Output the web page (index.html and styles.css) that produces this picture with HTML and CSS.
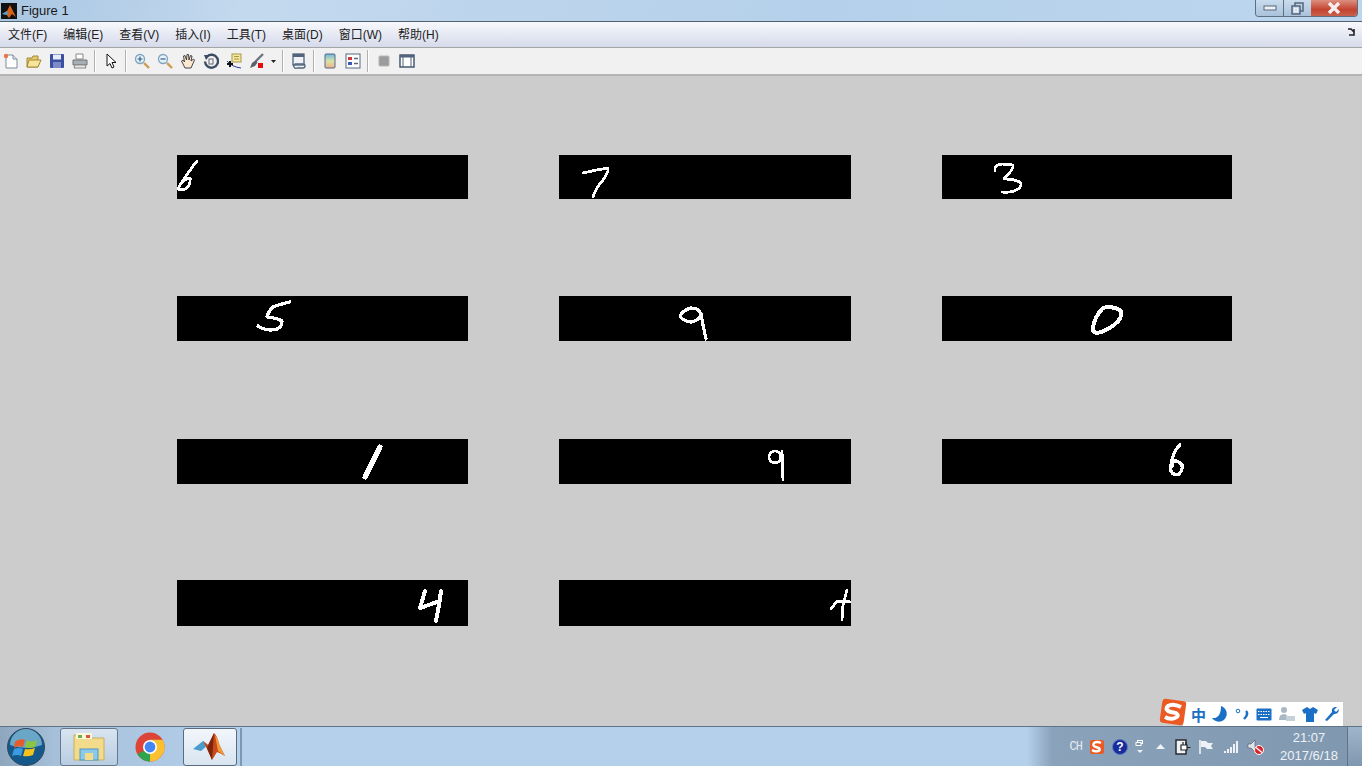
FILE: index.html
```html
<!DOCTYPE html>
<html lang="zh-CN">

<head>
    <meta charset="UTF-8">
    <title>Figure 1</title>
    <link rel="stylesheet" href="styles.css">
</head>

<body>
    <div class="window">
        <div class="titlebar">
            <svg class="appicon" viewBox="0 0 16 16">
                <rect width="16" height="16" fill="#111" />
                <path d="M1 11 L6 8 L9 2 L15 14 L11 11 L8 15 L5 11Z" fill="#d8641c" />
                <path d="M1 11 L6 8 L7 11 L5 12Z" fill="#4aa3c8" />
            </svg>
            <span class="title">Figure 1</span>
            <div class="winbtns">
                <div class="winbtn minbtn"><svg width="14" height="8" viewBox="0 0 14 8"><rect x="1" y="2" width="12" height="4" fill="#eef2f6" stroke="#56667a" /></svg></div>
                <div class="winbtn maxbtn"><svg width="13" height="13" viewBox="0 0 13 13"><rect x="4" y="1" width="8" height="8" fill="none" stroke="#56667a" stroke-width="1.5" /><rect x="1" y="4" width="8" height="8" fill="#c6d8ea" stroke="#56667a" stroke-width="1.5" /><rect x="3.5" y="6.5" width="3" height="3" fill="none" stroke="#eef2f6" /></svg></div>
                <div class="winbtn closebtn"><svg width="16" height="12" viewBox="0 0 16 12"><path d="M3 1 L13 11 M13 1 L3 11" stroke="#f5eeee" stroke-width="3.4" /></svg></div>
            </div>
        </div>

        <div class="menubar">
            <span>文件(F)</span>
            <span>编辑(E)</span>
            <span>查看(V)</span>
            <span>插入(I)</span>
            <span>工具(T)</span>
            <span>桌面(D)</span>
            <span>窗口(W)</span>
            <span>帮助(H)</span>
            <svg class="dock" width="9" height="8" viewBox="0 0 9 8"><path d="M1 1 L4 1 L7 4 M7 1 L7 7 L2 7" fill="none" stroke="#222" stroke-width="1.6" /></svg>
        </div>

        <div class="toolbar">
            <svg class="tool" viewBox="0 0 16 16"><path d="M3 2 H10 L14 6 V15 H3Z" fill="#fff" stroke="#7b8a9c" /><path d="M10 2 V6 H14" fill="#dfe8f2" stroke="#7b8a9c" /><circle cx="3" cy="3" r="2.2" fill="#e8764a" /></svg>
            <svg class="tool" viewBox="0 0 16 16"><path d="M1 5 H6 L7 3 H12 V14 H1Z" fill="#e8c868" stroke="#a08838" /><path d="M1 14 L3 7 H15 L12 14Z" fill="#f8e49a" stroke="#a08838" /></svg>
            <svg class="tool" viewBox="0 0 16 16"><rect x="1" y="1" width="14" height="14" rx="1" fill="#3b4fa0" /><rect x="4" y="1.5" width="8" height="5" fill="#e8ecf6" /><rect x="4" y="9" width="8" height="6" fill="#7c8ac8" /></svg>
            <svg class="tool" viewBox="0 0 16 16"><path d="M4 1 H11 V6 H4Z" fill="#fff" stroke="#888" /><path d="M1 7 H15 V12 H1Z" fill="#a8aeb4" stroke="#6c7278" /><path d="M3 12 H13 L14 15 H2Z" fill="#e6e8ea" stroke="#888" /></svg>
            <i class="sep"></i>
            <svg class="tool" viewBox="0 0 16 16"><path d="M4 1 V13 L7 10.5 L9 15 L11 14 L9 9.5 H13Z" fill="#fff" stroke="#111" /></svg>
            <i class="sep"></i>
            <svg class="tool" viewBox="0 0 16 16"><circle cx="6" cy="6" r="4.5" fill="#e6f2fa" stroke="#7ea4c0" stroke-width="1.3" /><path d="M10 10 L15 15" stroke="#d09a50" stroke-width="2.4" /><path d="M3.5 6 H8.5 M6 3.5 V8.5" stroke="#2c5c88" stroke-width="1.2" /></svg>
            <svg class="tool" viewBox="0 0 16 16"><circle cx="6" cy="6" r="4.5" fill="#e6f2fa" stroke="#7ea4c0" stroke-width="1.3" /><path d="M10 10 L15 15" stroke="#d09a50" stroke-width="2.4" /><path d="M3.5 6 H8.5" stroke="#2c5c88" stroke-width="1.2" /></svg>
            <svg class="tool" viewBox="0 0 16 16"><path d="M5 15 L1.5 8 L3 7 L4.5 9 L3.5 3 L5 2.5 L6.5 7 L7 1.5 L8.5 1.5 L9 7 L10.5 2.5 L12 3 L11 8 L13.5 6 L14.5 7 L11 15Z" fill="#fce8d0" stroke="#333" stroke-width=".9" /></svg>
            <svg class="tool" viewBox="0 0 16 16"><path d="M4 3.5 A6.5 6.5 0 1 1 2 8.5" fill="none" stroke="#3c4c64" stroke-width="2.4" /><path d="M1 2 L7 2 L3 7Z" fill="#3c4c64" /><rect x="6" y="6" width="4" height="5" fill="none" stroke="#667" /></svg>
            <svg class="tool" viewBox="0 0 16 16"><rect x="6" y="1" width="9" height="8" fill="#f4e8a0" stroke="#a89848" /><path d="M8 3.5 H13 M8 6 H13" stroke="#a89848" /><path d="M1 8 Q6 14 15 15" fill="none" stroke="#2a3a9c" /><path d="M4 8 V14 M1 11 H7" stroke="#111" stroke-width="2" /></svg>
            <div class="brush">
                <svg class="tool" viewBox="0 0 16 16"><path d="M14 1 L7 8" stroke="#6c7480" stroke-width="2.4" /><path d="M7 7 L3 10 L1 15 L6 13 L8.5 9.5Z" fill="#59616c" /><rect x="9" y="10" width="5" height="5" fill="#e01010" /></svg>
                <svg class="caret" width="5" height="3" viewBox="0 0 5 3"><path d="M0 0 H5 L2.5 3Z" fill="#222" /></svg>
            </div>
            <i class="sep"></i>
            <svg class="tool" viewBox="0 0 16 16"><rect x="2" y="1" width="11" height="11" fill="#eef2f6" stroke="#51647c" stroke-width="1.3" /><rect x="2" y="1" width="11" height="3" fill="#51647c" /><path d="M4 11 H12 A2 2 0 0 1 12 15 H6 A2 2 0 0 1 4 11Z" fill="none" stroke="#51647c" stroke-width="1.3" /></svg>
            <i class="sep"></i>
            <svg class="tool" viewBox="0 0 16 16"><defs><linearGradient id="cbar" x1="0" y1="0" x2="0" y2="1"><stop offset="0" stop-color="#6cb4e4" /><stop offset=".5" stop-color="#d8e4a8" /><stop offset="1" stop-color="#f0b088" /></linearGradient></defs><rect x="3" y="1" width="10" height="14" rx="1" fill="url(#cbar)" stroke="#56687e" /></svg>
            <svg class="tool" viewBox="0 0 16 16"><rect x="1" y="1" width="14" height="14" fill="#fff" stroke="#56687e" /><rect x="3" y="4" width="4" height="3" fill="#d03838" /><rect x="3" y="9" width="4" height="3" fill="#3858c0" /><path d="M9 5.5 H13 M9 10.5 H13" stroke="#56687e" stroke-width="1.3" /></svg>
            <i class="sep"></i>
            <svg class="tool" viewBox="0 0 16 16"><rect x="3" y="3" width="10" height="10" rx="1" fill="#9c9c9c" stroke="#b4b4b4" /></svg>
            <svg class="tool" viewBox="0 0 16 16"><rect x="1" y="2" width="14" height="12" fill="#fff" stroke="#3c4e68" stroke-width="1.4" /><rect x="1" y="2" width="14" height="2.5" fill="#50627c" /><path d="M4 4 V14 M12 4 V14" stroke="#50627c" /></svg>
        </div>

        <div class="canvas">
            <div class="plot"><svg viewBox="0 0 292 47"><path class="stroke" d="M20 6 Q12 16 3 30 L1 34 Q8 36 11 32 Q14 26 13 23 Q8 23 3 30" /></svg></div>
            <div class="plot"><svg viewBox="0 0 292 47"><path class="stroke" d="M24 18 Q36 15 49 13 Q50 17 44 25 Q37 33 34 42" /></svg></div>
            <div class="plot"><svg viewBox="0 0 292 47"><path class="stroke" d="M53 16 Q52 10 60 9 L71 10 Q72 14 62 24 Q74 24 79 28 Q80 33 72 36 Q65 38 60 37" /></svg></div>
            <div class="plot"><svg viewBox="0 0 292 47"><path class="stroke mid" d="M113 6 Q100 9 96 11 Q91 16 90 21 Q100 22 105 25 Q105 31 100 33 Q90 36 81 30" /></svg></div>
            <div class="plot"><svg viewBox="0 0 292 47"><path class="stroke mid" d="M142 18 Q140 12 132 12 Q124 14 121 20 Q124 25 132 26 Q140 25 142 18 Q144 30 147 43" /></svg></div>
            <div class="plot"><svg viewBox="0 0 292 47"><path class="stroke thick" d="M151 31 Q153 20 161 12 Q170 9 179 15 Q181 22 172 29 Q162 36 155 37 Q150 36 151 31Z" /></svg></div>
            <div class="plot third"><svg viewBox="0 0 292 47"><path class="stroke wide" d="M203 8 L188 38" /></svg></div>
            <div class="plot third"><svg viewBox="0 0 292 47"><circle class="stroke" cx="216" cy="18" r="6" /><path class="stroke" d="M223 12 L224 41" /></svg></div>
            <div class="plot third"><svg viewBox="0 0 292 47"><path class="stroke mid" d="M238 6 Q232 12 231 18 Q228 26 229 32 Q231 37 237 35 Q241 31 240 26 Q236 21 232 22 Q230 24 230 28" /></svg></div>
            <div class="plot fourth"><svg viewBox="0 0 292 47"><path class="stroke thick" d="M248 11 L243 28 L263 21 M264 11 L262 25 L259 41" /></svg></div>
            <div class="plot fourth"><svg viewBox="0 0 292 47"><path class="stroke" d="M288 10 L284 25 L283 40 M272 29 L278 21 L292 22" /></svg></div>
        </div>

        <div class="imebar">
            <svg class="imelogo" width="28" height="28" viewBox="0 0 28 28"><rect x="2" y="2" width="24" height="24" rx="3" fill="#ec5a24" transform="rotate(8 14 14)" /><path d="M22 9 Q14 5 9 8 Q5 12 12 14 L17 15 Q21 18 16 20 Q11 22 6 19" fill="none" stroke="#fff" stroke-width="4" /></svg>
            <div class="imeitems">
                <span class="imezh">中</span>
                <svg width="16" height="16" viewBox="0 0 16 16"><path d="M9 0 A8 8 0 1 1 0 12 Q9 13 9 0Z" fill="#1b6fc4" /></svg>
                <svg width="16" height="16" viewBox="0 0 16 16"><circle cx="4" cy="5" r="1.8" fill="none" stroke="#1b6fc4" /><path d="M12 5 Q15 8 10 13" fill="none" stroke="#1b6fc4" stroke-width="2.4" /></svg>
                <svg width="16" height="13" viewBox="0 0 16 13"><rect x=".5" y=".5" width="15" height="12" rx="1" fill="#1b6fc4" /><path d="M2 3.5 H14 M2 6.5 H14" stroke="#fff" stroke-dasharray="1.5 1" /><path d="M4 9.5 H12" stroke="#fff" /></svg>
                <svg width="18" height="16" viewBox="0 0 18 16"><circle cx="6" cy="4" r="3" fill="#aab8c6" /><path d="M1 14 Q1 8 6 8 Q10 8 10 14Z" fill="#aab8c6" /><rect x="8" y="10" width="9" height="5" fill="#c6d0da" /></svg>
                <svg width="16" height="15" viewBox="0 0 16 15"><path d="M5 0 L8 2 L11 0 L16 3 L14 7 L12 6 V15 H4 V6 L2 7 L0 3Z" fill="#1b6fc4" /></svg>
                <svg width="16" height="16" viewBox="0 0 16 16"><path d="M1 14 L8 6 Q7 2 11 1 L13 1 L10 4 L12 6 L15 3 Q15 8 10 8 L3 15Z" fill="#1b6fc4" /></svg>
            </div>
        </div>

        <div class="taskbar">
            <div class="orb">
                <svg width="38" height="38" viewBox="0 0 38 38">
                    <circle cx="19" cy="19" r="18.5" fill="#15588a" stroke="#33495c" />
                    <path d="M3 17 A16 16 0 0 1 35 17 Q19 23 3 17Z" fill="#6aa6c6" />
                    <path d="M8 14 Q12 10 18 12 L16 19 Q11 17 7 20Z" fill="#e85a2a" />
                    <path d="M20 12 Q24 15 30 12 L28 19 Q23 21 18 19Z" fill="#8cc63f" />
                    <path d="M7 21 Q11 19 16 21 L14 28 Q10 26 5 28Z" fill="#3c9ae0" />
                    <path d="M18 21 Q23 22 28 20 L26 27 Q21 29 16 28Z" fill="#f6c21c" />
                </svg>
            </div>
            <div class="taskbtn explorer">
                <svg width="34" height="30" viewBox="0 0 34 30"><path d="M2 3 H14 L16 6 H32 V28 H2Z" fill="#f2dc8c" stroke="#c8ae5c" /><rect x="4" y="1" width="16" height="6" fill="#fbf6dc" /><rect x="6" y="3" width="4" height="3" fill="#6cb04c" /><rect x="14" y="3" width="4" height="3" fill="#d05a3c" /><rect x="8" y="17" width="18" height="11" fill="#8cc8e8" stroke="#4c98c8" /><rect x="13" y="21" width="8" height="7" fill="#f2dc8c" /></svg>
            </div>
            <div class="taskbtn plain">
                <svg width="30" height="30" viewBox="0 0 30 30">
                    <circle cx="15" cy="15" r="14.5" fill="#dd4437" />
                    <path d="M15 15 L2.44 22.25 A14.5 14.5 0 0 0 15 29.5Z" fill="#2ea44f" />
                    <path d="M15 15 L15 29.5 A14.5 14.5 0 0 0 27.56 7.75 L15 7.75Z" fill="#fbc02d" />
                    <path d="M2.44 7.75 L8 19 L15 15Z" fill="#dd4437" />
                    <circle cx="15" cy="15" r="7" fill="#fff" />
                    <circle cx="15" cy="15" r="5.4" fill="#4285f4" />
                </svg>
            </div>
            <div class="taskbtn active">
                <svg width="34" height="30" viewBox="0 0 34 30">
                    <path d="M0 17 L10 9 L15 13 L8 19Z" fill="#4a9ccc" />
                    <path d="M10 9 L15 13 L21 1 Q24 3 26 12 L32 24 Q27 21 24 20 L19 28 L14 17Z" fill="#c84a18" />
                    <path d="M21 1 L19 28 L14 16Z" fill="#7c2410" />
                    <path d="M22 3 Q25 6 27 14 L32 24 L25 19Z" fill="#ef9a3c" />
                </svg>
            </div>
            <i class="taskgroove"></i>
            <div class="tray">
                <span class="lang">CH</span>
                <svg width="16" height="16" viewBox="0 0 16 16"><rect x="1" y="1" width="14" height="14" rx="2" fill="#ec5a24" /><path d="M12 4 Q8 2 5 4 Q3 7 7 8 L10 9 Q12 11 9 12 Q6 13 3 11" fill="none" stroke="#fff" stroke-width="2.4" /></svg>
                <svg width="16" height="16" viewBox="0 0 16 16"><circle cx="8" cy="8" r="7.5" fill="#1a2c9c" stroke="#5c78c0" /><text class="helpmark" x="8" y="12" text-anchor="middle">?</text></svg>
                <svg width="10" height="16" viewBox="0 0 10 16"><rect x="2.5" y="1.5" width="5" height="3" fill="none" stroke="#fff" /><rect x="1" y="3.5" width="5" height="3" fill="#7e96ae" stroke="#fff" /><path d="M2 11 H8 L5 14Z" fill="#eef2f6" /></svg>
                <svg class="arrowup" width="9" height="6" viewBox="0 0 9 6"><path d="M0 5 L4.5 0 L9 5Z" fill="#eef2f6" /></svg>
                <svg class="plug" width="16" height="16" viewBox="0 0 16 16"><rect x="1" y="1" width="10" height="14" fill="#eef2f6" stroke="#222" stroke-width="1.4" /><path d="M6 6 H12 V11 H6Z M12 8.5 H15.5 M8 6 V3 M11 6 V3" fill="#fff" stroke="#222" stroke-width="1.2" /></svg>
                <svg width="16" height="16" viewBox="0 0 16 16"><path d="M2 1 V15" stroke="#eef2f6" stroke-width="1.6" /><path d="M3 2 H8 L10 4 H15 L13 7 L15 10 H9 L7 8 H3Z" fill="#eef2f6" /></svg>
                <svg class="signal" width="16" height="14" viewBox="0 0 16 14"><path d="M1 11 H3 V13 H1Z M4 9 H6 V13 H4Z M7 7 H9 V13 H7Z M10 4 H12 V13 H10Z M13 1 H15 V13 H13Z" fill="#eef2f6" /></svg>
                <svg class="speaker" width="17" height="16" viewBox="0 0 17 16"><path d="M1 5 H4 L8 1 V13 L4 9 H1Z" fill="#dde4ea" stroke="#556" stroke-width=".6" /><circle cx="12" cy="11" r="4.5" fill="#d8242c" stroke="#fff" /><path d="M9 8.5 L15 13.5" stroke="#fff" stroke-width="1.4" /></svg>
                <div class="clock">
                    <span>21:07</span>
                    <span>2017/6/18</span>
                </div>
                <div class="showdesktop"></div>
            </div>
        </div>
    </div>
</body>

</html>
```
FILE: styles.css
```css
* {
    margin: 0;
    padding: 0;
    box-sizing: border-box;
}

body {
    width: 1362px;
    height: 766px;
    overflow: hidden;
    font-family: "Liberation Sans", "Noto Sans CJK SC", sans-serif;
    font-size: 12px;
}

.window {
    position: relative;
    display: flex;
    flex-direction: column;
    height: 766px;
}

.titlebar {
    display: flex;
    align-items: center;
    height: 22px;
    background: linear-gradient(100deg, #a9c6e2 0%, #c3d9ee 18%, #b5d0ea 60%, #bdd6ee 100%);
    border-bottom: 1px solid #50606e;
}

.appicon {
    width: 16px;
    height: 16px;
    margin-left: 1px;
    flex: none;
}

.title {
    margin-left: 4px;
    font-size: 13px;
    color: #1a1a1a;
}

.winbtns {
    display: flex;
    align-self: flex-start;
    height: 17px;
    margin-left: auto;
    margin-right: 4px;
    border: 1px solid #5d6f82;
    border-top: 0;
    border-radius: 0 0 4px 4px;
    overflow: hidden;
}

.winbtn {
    display: flex;
    align-items: center;
    justify-content: center;
    height: 100%;
    background: linear-gradient(#c9dcee, #a9c2da);
}

.minbtn {
    width: 28px;
    border-right: 1px solid #5d6f82;
}

.maxbtn {
    width: 27px;
}

.closebtn {
    width: 46px;
    background: linear-gradient(#dc8f80, #c4432f 60%, #c8604c);
}

.menubar {
    display: flex;
    align-items: center;
    gap: 16px;
    height: 26px;
    padding: 0 8px 3px;
    background: linear-gradient(#f8f9fc, #d5daeb);
    border-bottom: 1px solid #a5a5a5;
    color: #222;
    white-space: nowrap;
}

.dock {
    margin-left: auto;
    margin-right: -2px;
    margin-top: -3px;
}

.toolbar {
    display: flex;
    align-items: center;
    gap: 7px;
    height: 28px;
    padding: 0 0 0 3px;
    background: #f1f1f1;
    border-bottom: 2px solid #b4b4b4;
}

.tool {
    width: 16px;
    height: 16px;
    flex: none;
}

.sep {
    width: 2px;
    height: 22px;
    margin-left: -1px;
    background: #b0b0b0;
    border-right: 1px solid #fff;
    flex: none;
}

.brush {
    display: flex;
    align-items: center;
    gap: 6px;
}

.canvas {
    flex: 1;
    display: grid;
    grid-template-columns: 291px 292px 290px;
    grid-template-rows: 44px 45px 46px 45px;
    column-gap: 91px;
    row-gap: 97px;
    padding: 79px 0 0 177px;
    background: #cccccc;
}

.plot {
    background: #000;
    overflow: hidden;
}

.third {
    margin-top: 1px;
}

.fourth {
    margin-top: -1px;
}

.plot svg {
    display: block;
    width: 292px;
    height: 47px;
}

/* the digits are thresholded images, so no anti-aliasing */
.stroke {
    fill: none;
    stroke: #fff;
    stroke-width: 2.8;
    stroke-linejoin: round;
    stroke-linecap: round;
    shape-rendering: crispEdges;
}

.mid {
    stroke-width: 3.2;
}

.thick {
    stroke-width: 4;
}

.wide {
    stroke-width: 5;
}

.imebar {
    position: absolute;
    right: 19px;
    bottom: 40px;
    display: flex;
    align-items: flex-end;
}

.imelogo {
    margin-right: -4px;
    position: relative;
    flex: none;
}

.imeitems {
    display: flex;
    align-items: center;
    gap: 6px;
    height: 24px;
    padding: 0 3px 0 8px;
    background: #fff;
}

.imezh {
    font-family: "Noto Sans CJK SC", sans-serif;
    font-size: 15px;
    font-weight: 700;
    color: #1b6fc4;
}

.taskbar {
    display: flex;
    align-items: center;
    height: 40px;
    background: linear-gradient(90deg, #8ea6be 0, #a6c0da 55px, #b5d0eb 245px, #b5d0eb 1027px, #8aa2ba 1052px, #7f97af 100%);
    border-top: 1px solid #5f7488;
}

.orb {
    display: flex;
    justify-content: center;
    width: 52px;
    margin-right: 8px;
}

.taskbtn {
    display: flex;
    align-items: center;
    justify-content: center;
    height: 38px;
}

.explorer {
    width: 58px;
    background: linear-gradient(#d8e4f0, #b8cde2);
    border: 1px solid #66798c;
    border-radius: 3px;
}

.plain {
    width: 65px;
    padding-right: 2px;
}

.active {
    width: 54px;
    background: linear-gradient(#f2f6fb, #d8e4f0);
    border: 1px solid #5a6c7e;
    border-radius: 3px;
}

.taskgroove {
    width: 2px;
    height: 38px;
    margin-left: 3px;
    background: #7f97af;
}

.tray {
    display: flex;
    align-items: center;
    gap: 7px;
    height: 100%;
    margin-left: auto;
}

.lang {
    font-family: "Liberation Mono", monospace;
    font-size: 12px;
    letter-spacing: -1px;
    color: #e8edf2;
}

.helpmark {
    font-family: "Liberation Sans", sans-serif;
    font-size: 12px;
    font-weight: 700;
    fill: #fff;
}

.arrowup {
    margin-left: 4px;
}

.plug {
    margin-left: 3px;
}

.signal {
    margin-left: 2px;
}

.speaker {
    margin-left: 1px;
}

.clock {
    display: flex;
    flex-direction: column;
    align-items: center;
    gap: 4px;
    width: 64px;
    margin-left: 5px;
    padding-left: 2px;
    font-size: 13px;
    color: #eef2f6;
    line-height: 14px;
}

.showdesktop {
    width: 15px;
    height: 100%;
    background: linear-gradient(#9fb5ca, #7f97af);
    border-left: 1px solid #5f7488;
}
```
